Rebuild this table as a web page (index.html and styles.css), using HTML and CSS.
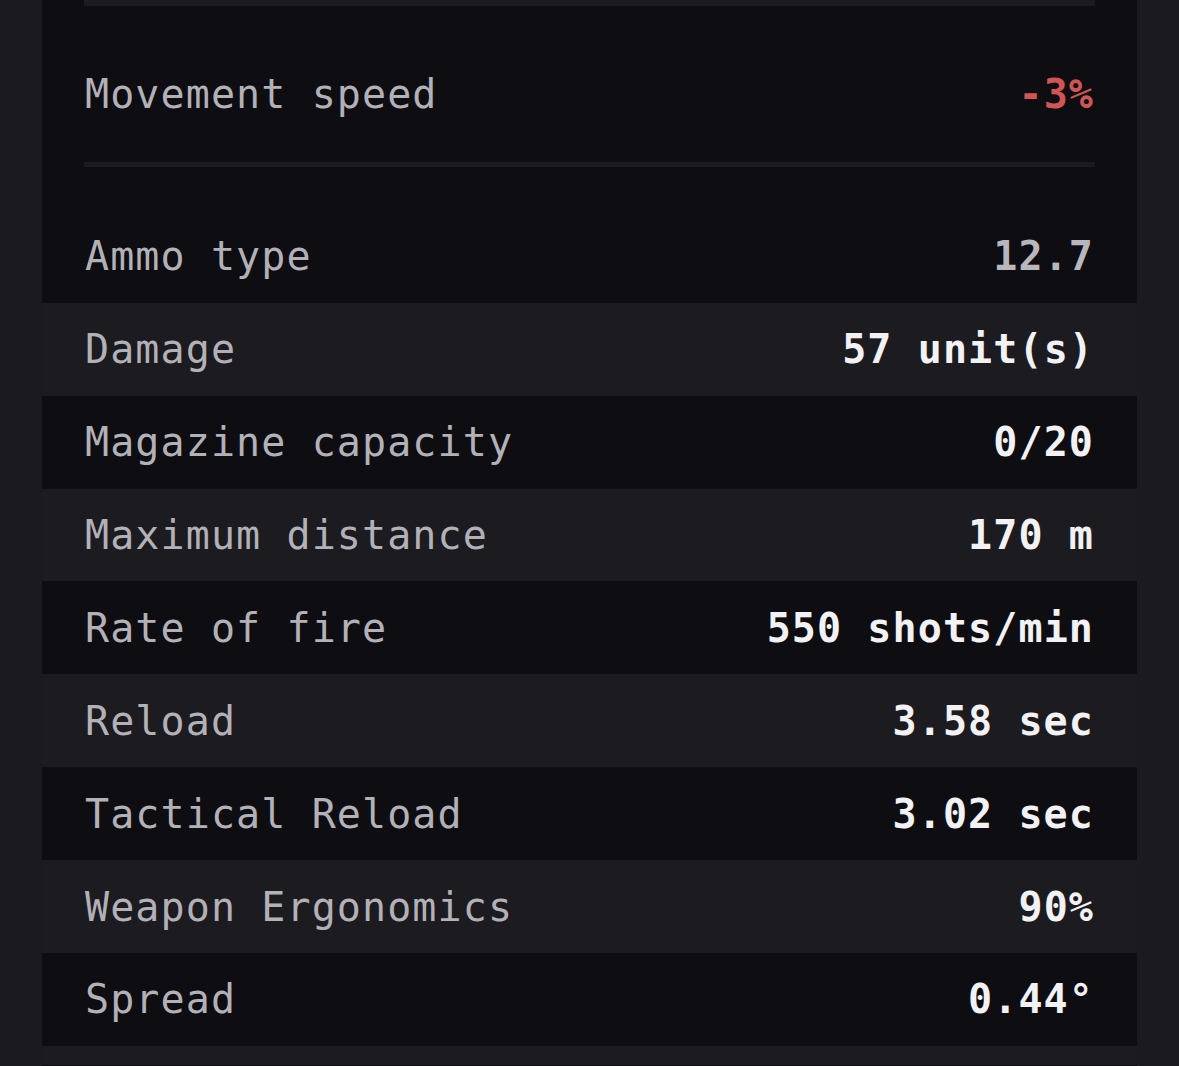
FILE: index.html
```html
<!DOCTYPE html>
<html>
<head>
<meta charset="utf-8">
<link rel="stylesheet" href="styles.css">
</head>
<body>
<div class="card">
  <div class="divider divider-top"></div>
  <div class="row row-move">
    <span class="label">Movement speed</span>
    <span class="value neg">-3%</span>
  </div>
  <div class="divider"></div>
  <div class="stats">
    <div class="row"><span class="label">Ammo type</span><span class="value muted">12.7</span></div>
    <div class="row alt"><span class="label">Damage</span><span class="value">57 unit(s)</span></div>
    <div class="row"><span class="label">Magazine capacity</span><span class="value">0/20</span></div>
    <div class="row alt"><span class="label">Maximum distance</span><span class="value">170 m</span></div>
    <div class="row"><span class="label">Rate of fire</span><span class="value">550 shots/min</span></div>
    <div class="row alt"><span class="label">Reload</span><span class="value">3.58 sec</span></div>
    <div class="row"><span class="label">Tactical Reload</span><span class="value">3.02 sec</span></div>
    <div class="row alt"><span class="label">Weapon Ergonomics</span><span class="value">90%</span></div>
    <div class="row"><span class="label">Spread</span><span class="value">0.44°</span></div>
    <div class="row alt row-end"></div>
  </div>
</div>
</body>
</html>
```

FILE: styles.css
```css
html, body {
  margin: 0;
  padding: 0;
  background: #1b1a1f;
  height: 100%;
  overflow: hidden;
}
.card {
  margin: 0 42px;
  background: #0e0d12;
  height: 100%;
  font-family: "DejaVu Sans Mono", "Liberation Mono", monospace;
  font-size: 40px;
  letter-spacing: 1.1px;
}
.divider {
  height: 5px;
  background: #1c1b20;
  margin: 0 42px 0 42px;
}
.divider-top {
  height: 6px;
}
.row {
  height: 92.9px;
  display: flex;
  align-items: center;
  justify-content: space-between;
  padding: 0 43px;
}
.row-move {
  margin-top: 42px;
  margin-bottom: 21px;
}
.stats {
  margin-top: 43px;
}
.alt {
  background: #1c1b20;
}
.row-end {
  height: 19px;
}
.label {
  color: #b2b1b7;
}
.value {
  color: #f2f2f4;
  font-weight: bold;
}
.value.muted {
  color: #b8b7bd;
}
.value.neg {
  color: #d25555;
}
```
